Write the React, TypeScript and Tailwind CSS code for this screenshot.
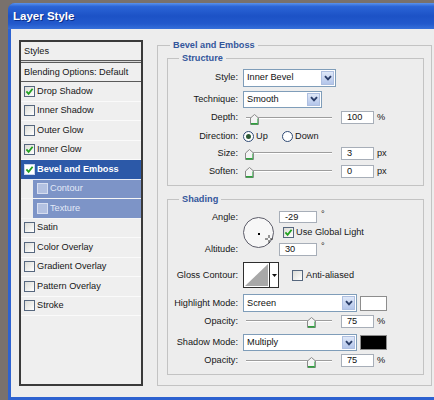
import React from "react";

function Chevron() {
  return (
    <svg viewBox="0 0 8 6" className="h-[6px] w-[8px]">
      <path d="M1 1.2 L4 4.4 L7 1.2" fill="none" stroke="#2a3d68" strokeWidth="1.9" />
    </svg>
  );
}

function Dropdown({ cls, text }: { cls: string; text: string }) {
  return (
    <div className={`flex items-stretch border border-[#7f9db9] bg-white ${cls}`}>
      <span className="flex flex-1 items-center pl-[3px] text-[#111]">{text}</span>
      <span className="m-[1px] flex w-[13px] items-center justify-center border border-[#aebfe0] bg-[linear-gradient(to_bottom,#dfe8f8,#b3c5ea)]">
        <Chevron />
      </span>
    </div>
  );
}

function Check({ checked = false, tone = "normal" }: { checked?: boolean; tone?: "normal" | "sel" | "sub" }) {
  const box =
    tone === "sub"
      ? "border-[#d7def0] bg-[#b3c1e1]"
      : tone === "sel"
      ? "border-[#c9d5ee] bg-white"
      : "border-[#56677e] bg-[linear-gradient(135deg,#dcdcd6,#ffffff)]";
  return (
    <span className={`flex h-[11px] w-[11px] shrink-0 items-center justify-center border ${box}`}>
      {checked && (
        <svg viewBox="0 0 9 9" className="h-[9px] w-[9px]">
          <path d="M1.4 4.4 L3.6 6.8 L7.6 1.8" fill="none" stroke="#21a121" strokeWidth="1.8" />
        </svg>
      )}
    </span>
  );
}

function Radio({ on = false }: { on?: boolean }) {
  return (
    <span className="flex h-[11px] w-[11px] shrink-0 items-center justify-center rounded-full border border-[#2f4a74] bg-white">
      {on && <span className="h-[5px] w-[5px] rounded-full bg-[#2d5a36]" />}
    </span>
  );
}

function Thumb() {
  return (
    <svg width="9" height="11" viewBox="0 0 9 11">
      <path d="M0.5 4 L4.5 0.5 L8.5 4 V10.5 H0.5 Z" fill="#f4f4f4" stroke="#8a8a8a" strokeWidth="1" />
      <path d="M1 9.8 H8" stroke="#2e9e3c" strokeWidth="1.6" />
      <path d="M7.6 4.5 V9.5" stroke="#6cc27a" strokeWidth="1" />
    </svg>
  );
}

function Slider({ pos }: { pos: string }) {
  return (
    <div className="relative h-full w-[93px] shrink-0">
      <div className="absolute left-[3px] right-[4px] top-1/2 h-[2px] -translate-y-[1px] bg-[linear-gradient(#9d9d9d_50%,#ffffff_50%)]" />
      <div className={`absolute top-1/2 -mt-[4px] flex ${pos}`}>
        <Thumb />
      </div>
    </div>
  );
}

function NumBox({ v, cls = "h-[13px]" }: { v: string; cls?: string }) {
  return (
    <div className={`flex w-[33px] shrink-0 items-center border border-[#a7aeb8] bg-white pl-[5px] text-[#111] ${cls}`}>{v}</div>
  );
}

function Label({ children }: { children: React.ReactNode }) {
  return <span className="w-[70px] shrink-0 whitespace-nowrap text-right">{children}</span>;
}

function SliderRow({ cls, label, pos, v, unit }: { cls: string; label: string; pos: string; v: string; unit: string }) {
  return (
    <div className={`flex items-center ${cls}`}>
      <Label>{label}</Label>
      <div className="ml-[5px] flex h-full items-center">
        <Slider pos={pos} />
      </div>
      <div className="ml-[5px]">
        <NumBox v={v} />
      </div>
      <span className="ml-[3px]">{unit}</span>
    </div>
  );
}

type Row = { t: string; c?: boolean; sel?: boolean; sub?: boolean };
const rows: Row[] = [
  { t: "Drop Shadow", c: true },
  { t: "Inner Shadow" },
  { t: "Outer Glow" },
  { t: "Inner Glow", c: true },
  { t: "Bevel and Emboss", c: true, sel: true },
  { t: "Contour", sub: true },
  { t: "Texture", sub: true },
  { t: "Satin" },
  { t: "Color Overlay" },
  { t: "Gradient Overlay" },
  { t: "Pattern Overlay" },
  { t: "Stroke" },
];

function LeftPanel() {
  return (
    <div className="flex h-[346px] w-[124px] shrink-0 flex-col border-2 border-[#3a3a3a] bg-[#efefef]">
      <div className="flex h-[18px] items-center pl-[3px]">Styles</div>
      <div className="h-[1px] bg-[#5a5a5a]" />
      <div className="h-[1px] bg-[#d8d8d8]" />
      <div className="h-[1px] bg-[#5a5a5a]" />
      <div className="flex h-[18px] items-center pl-[3px]">Blending Options: Default</div>
      <div className="h-[1px] bg-[#5a5a5a]" />
      {rows.map((r) =>
        r.sub ? (
          <div key={r.t} className="flex h-[19.5px] border-b border-[#f6f6f6]">
            <div className="w-[12px]" />
            <div className="flex flex-1 items-center gap-[2px] bg-[#7d94c7] pl-[4px] text-[#e2e9f7]">
              <Check tone="sub" />
              <span>{r.t}</span>
            </div>
          </div>
        ) : r.sel ? (
          <div key={r.t} className="flex h-[19.5px] items-center gap-[2px] border-b border-[#e8ecf5] bg-[#2c59a8] pl-[3px] font-bold text-white">
            <Check checked tone="sel" />
            <span>{r.t}</span>
          </div>
        ) : (
          <div key={r.t} className="flex h-[19.5px] items-center gap-[2px] border-b border-[#fafafa] pl-[3px]">
            <Check checked={r.c} />
            <span>{r.t}</span>
          </div>
        )
      )}
    </div>
  );
}

function AngleDial() {
  return (
    <div className="relative ml-[5px] mt-[6px] h-[31px] w-[31px] shrink-0 rounded-full border-[1.5px] border-[#5d5d6a] bg-[#f7f7f7]">
      <span className="absolute left-[14px] top-[15px] h-[2px] w-[2px] bg-black" />
      <svg className="absolute left-[21px] top-[17px]" width="8" height="8" viewBox="0 0 8 8">
        <path d="M4 0v3M4 5v3M0 4h3M5 4h3" stroke="#333" strokeWidth="1" />
      </svg>
    </div>
  );
}

function ContourSwatch() {
  return (
    <div className="ml-[5px] flex h-[26px] w-[36px] shrink-0 border border-[#2e2e2e] bg-white">
      <div className="flex flex-1 p-[1px]">
        <svg className="h-full w-full" viewBox="0 0 24 22" preserveAspectRatio="none">
          <polygon points="0,22 24,0 24,22" fill="#a8a8a8" />
        </svg>
      </div>
      <div className="flex w-[9px] items-center justify-center border-l border-[#2e2e2e]">
        <svg width="5" height="3" viewBox="0 0 5 3">
          <polygon points="0,0 5,0 2.5,3" fill="#111" />
        </svg>
      </div>
    </div>
  );
}

function RightPanel() {
  return (
    <fieldset className="ml-[14px] h-[346px] w-[275px] shrink-0 border border-[#c3c3c3] pl-[9px] pr-[7px]">
      <legend className="ml-[3px] px-[3px] font-bold text-[#34579c]">Bevel and Emboss</legend>
      <fieldset className="mt-[2px] h-[133px] border border-[#c3c3c3]">
        <legend className="ml-[11px] px-[3px] font-bold text-[#34579c]">Structure</legend>
        <div className="mt-[4.5px] flex h-[18px] items-center">
          <Label>Style:</Label>
          <Dropdown cls="ml-[5px] w-[93px] h-[18px]" text="Inner Bevel" />
        </div>
        <div className="mt-[4px] flex h-[17px] items-center">
          <Label>Technique:</Label>
          <Dropdown cls="ml-[5px] w-[79px] h-[17px]" text="Smooth" />
        </div>
        <SliderRow cls="mt-[1.5px] h-[17px]" label="Depth:" pos="left-[7px]" v="100" unit="%" />
        <div className="mt-[2px] flex h-[17px] items-center">
          <Label>Direction:</Label>
          <div className="ml-[5px] flex w-[39px] items-center">
            <Radio on />
            <span className="ml-[2px]">Up</span>
          </div>
          <div className="flex items-center">
            <Radio />
            <span className="ml-[2px]">Down</span>
          </div>
        </div>
        <SliderRow cls="h-[16px]" label="Size:" pos="left-[2px]" v="3" unit="px" />
        <SliderRow cls="mt-[2px] h-[16px]" label="Soften:" pos="left-[2px]" v="0" unit="px" />
      </fieldset>
      <fieldset className="mt-[7.5px] h-[181px] border border-[#c3c3c3]">
        <legend className="ml-[11px] px-[3px] font-bold text-[#34579c]">Shading</legend>
        <div className="mt-[6.5px] flex h-[45px]">
          <div className="flex w-[70px] shrink-0 flex-col justify-between text-right">
            <span className="flex h-[12px] items-center justify-end">Angle:</span>
            <span className="flex h-[13px] items-center justify-end">Altitude:</span>
          </div>
          <AngleDial />
          <div className="ml-[5px] flex flex-col">
            <div className="flex h-[12px]">
              <NumBox v="-29" cls="h-[12px] w-[38px]" />
              <span className="ml-[4px] -mt-[2px] leading-[10px]">°</span>
            </div>
            <div className="ml-[4px] mt-[4px] flex h-[11px] items-center gap-[2px]">
              <Check checked />
              <span className="whitespace-nowrap">Use Global Light</span>
            </div>
            <div className="mt-[5px] flex h-[13px]">
              <NumBox v="30" cls="h-[13px] w-[38px]" />
              <span className="ml-[4px] -mt-[2px] leading-[10px]">°</span>
            </div>
          </div>
        </div>
        <div className="mt-[6px] flex h-[26px] items-center">
          <Label>Gloss Contour:</Label>
          <ContourSwatch />
          <div className="ml-[13px] flex items-center gap-[3px]">
            <Check />
            <span>Anti-aliased</span>
          </div>
        </div>
        <div className="mt-[6px] flex h-[18px] items-center">
          <Label>Highlight Mode:</Label>
          <Dropdown cls="ml-[5px] w-[114px] h-[18px]" text="Screen" />
          <div className="ml-[3px] h-[15px] w-[27px] border border-[#8d8d8d] bg-white" />
        </div>
        <SliderRow cls="mt-[2px] h-[14px]" label="Opacity:" pos="left-[64px]" v="75" unit="%" />
        <div className="mt-[6px] flex h-[17px] items-center">
          <Label>Shadow Mode:</Label>
          <Dropdown cls="ml-[5px] w-[114px] h-[17px]" text="Multiply" />
          <div className="ml-[3px] h-[15px] w-[27px] border border-[#8d8d8d] bg-black" />
        </div>
        <SliderRow cls="mt-[3px] h-[13px]" label="Opacity:" pos="left-[64px]" v="75" unit="%" />
      </fieldset>
    </fieldset>
  );
}

export default function App() {
  return (
    <div className="relative h-[400px] w-[434px] overflow-hidden bg-[#79716c] pl-[8px] pt-[3px] font-['Liberation_Sans',Arial,sans-serif] text-[9.2px] leading-[11px] text-[#161616]">
      <div className="flex w-[470px] flex-col rounded-t-[7px] bg-[#2d62d0]">
        <div className="flex h-[26px] items-center rounded-t-[7px] bg-[linear-gradient(to_bottom,#5a92ec_0%,#2a64d6_14%,#1c52c6_50%,#2259cc_80%,#3670da_100%)] pl-[5px]">
          <span className="text-[11.5px] font-bold text-white [text-shadow:1px_1px_0_#0b2f8a]">Layer Style</span>
        </div>
        <div className="mx-[3px] mb-[3px] flex h-[368px] items-start bg-[#ededed] pl-[8px] pt-[11px]">
          <LeftPanel />
          <RightPanel />
        </div>
      </div>
    </div>
  );
}
